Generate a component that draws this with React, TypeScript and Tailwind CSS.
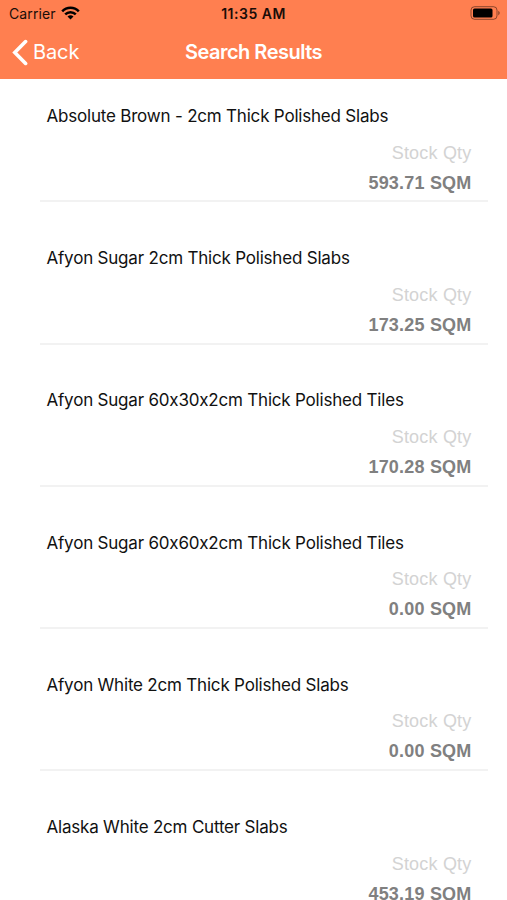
const ITEMS = [
  { name: 'Absolute Brown - 2cm Thick Polished Slabs', qty: '593.71 SQM' },
  { name: 'Afyon Sugar 2cm Thick Polished Slabs', qty: '173.25 SQM' },
  { name: 'Afyon Sugar 60x30x2cm Thick Polished Tiles', qty: '170.28 SQM' },
  { name: 'Afyon Sugar 60x60x2cm Thick Polished Tiles', qty: '0.00 SQM' },
  { name: 'Afyon White 2cm Thick Polished Slabs', qty: '0.00 SQM' },
  { name: 'Alaska White 2cm Cutter Slabs', qty: '453.19 SQM' },
]

function StatusBar() {
  return (
    <div className="h-[27px] grid grid-cols-3 items-center text-[#1a0d08] text-[14px] leading-none">
      <div className="flex items-center gap-[5px] pl-[9px]">
        <span className="tracking-[0.1px]">Carrier</span>
        <svg className="w-[19px] h-[14px] -mt-0.5" viewBox="0 0 19 14" fill="none" stroke="#000" strokeWidth={2.5}>
          <path d="M1.2 5.3a11.6 11.6 0 0 1 16.6 0" />
          <path d="M4.2 8.4a7.4 7.4 0 0 1 10.6 0" />
          <path d="M9.5 13.6L6.5 10.6a4.3 4.3 0 0 1 6 0z" fill="#000" stroke="none" />
        </svg>
      </div>
      <span className="text-center font-semibold tracking-[0.5px]">11:35 AM</span>
      <div className="flex justify-end pr-[6px]">
        <svg className="w-[31px] h-[14px] -mt-px" viewBox="0 0 31 14">
          <rect x="1" y="0.7" width="26" height="12.6" rx="3.5" fill="none" stroke="#000" strokeOpacity="0.45" />
          <rect x="3" y="2.5" width="19.5" height="9" rx="1.5" fill="#000" />
          <path d="M28.3 4.8a2.6 2.6 0 0 1 0 4.6z" fill="#000" fillOpacity="0.5" />
        </svg>
      </div>
    </div>
  )
}

export default function App() {
  return (
    <div className="h-[900px] overflow-hidden bg-white font-['Inter',sans-serif] [font-feature-settings:'calt'_0]">
      <header className="h-[79px] bg-[#ff7f50]">
        <StatusBar />
        <div className="h-[50px] grid grid-cols-[1fr_auto_1fr] items-center text-white leading-none">
          <button className="flex items-center gap-[5px] pl-3 text-[20px] tracking-[-0.1px]">
            <svg className="w-4 h-[27px]" viewBox="0 0 16 27" fill="none" stroke="#fff" strokeWidth={3.6} strokeLinecap="round">
              <path d="M13.6 2.6L2.8 13.5L13.6 24.4" />
            </svg>
            Back
          </button>
          <h1 className="text-[20px] font-semibold tracking-[-0.5px]">Search Results</h1>
        </div>
      </header>

      <ul>
        {ITEMS.map(item => (
          <li key={item.name} className="h-[142.2px] pl-10 pr-[19px] flex flex-col">
            <div className="h-[123.4px] shrink-0 border-b-2 border-[#f2f2f2] pl-[6.5px] pr-[16.5px]">
              <p className="pt-[26px] text-[17px] leading-[22px] tracking-[-0.2px] text-[#111]">{item.name}</p>
              <div className="pt-[10.6px] text-right font-['Liberation_Sans',sans-serif] text-[18px] leading-[30px] tracking-[0.2px]">
                <p className="text-[#d3d3d3]">Stock Qty</p>
                <p className="font-bold text-[#808080]">{item.qty}</p>
              </div>
            </div>
          </li>
        ))}
      </ul>
    </div>
  )
}
